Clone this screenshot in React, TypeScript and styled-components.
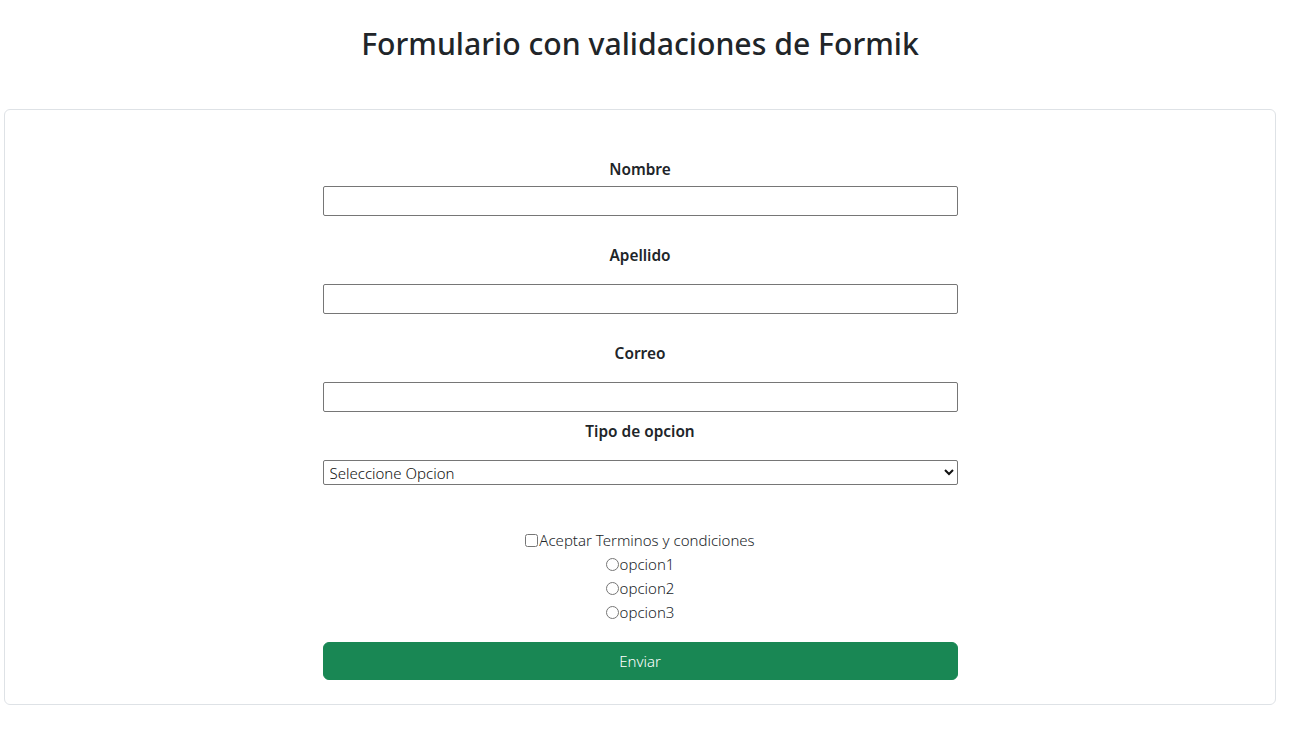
import React from "react";
import styled, { createGlobalStyle } from "styled-components";

const Global = createGlobalStyle`
  html, body { margin: 0; padding: 0; background: #fff; }
  body {
    font-family: "Noto Sans", "Open Sans", sans-serif;
    color: #212529;
    font-size: 16px;
    line-height: 1.5;
  }
  *, *::before, *::after { box-sizing: border-box; }
`;

const Page = styled.div`
  display: flex;
  flex-direction: column;
  padding: 25px 32px 0 4px;
`;

const Title = styled.h1`
  margin: 0 0 46px;
  text-align: center;
  font-size: 30.2px;
  font-weight: 500;
  line-height: 38px;
  color: #212529;
`;

const Card = styled.div`
  border: 1px solid #dee2e6;
  border-radius: 6px;
  padding: 48px 0 24px;
  display: flex;
  justify-content: center;
`;

const Form = styled.form`
  width: 635px;
  display: flex;
  flex-direction: column;
  align-items: stretch;
`;

const Label = styled.label<{ $gap: number; $top: number }>`
  display: block;
  text-align: center;
  font-weight: 600;
  font-size: 15.4px;
  line-height: 24px;
  margin-top: ${(p) => p.$top}px;
  margin-bottom: ${(p) => p.$gap}px;
`;

const Input = styled.input`
  display: block;
  width: 100%;
  height: 30px;
  margin: 0;
  border: 1px solid #767676;
  border-radius: 2px;
  font: inherit;
  padding: 1px 4px;
  background: #fff;
`;

const Select = styled.select`
  display: block;
  width: 100%;
  height: 25px;
  margin: 0;
  border: 1px solid #767676;
  border-radius: 2px;
  font-family: inherit;
  font-size: 15px;
  font-weight: 300;
  color: #111;
  background: #fff;
  padding: 0 2px;
`;

const Options = styled.div`
  margin-top: 43px;
  display: flex;
  flex-direction: column;
  align-items: center;
`;

const Line = styled.label`
  display: flex;
  align-items: center;
  font-size: 15px;
  font-weight: 300;
  line-height: 24px;
  color: #212529;
`;

const Check = styled.input`
  margin: 0 1px 0 0;
  width: 13px;
  height: 13px;
`;

const Button = styled.button`
  margin-top: 18px;
  height: 38px;
  width: 100%;
  border: 1px solid #198754;
  border-radius: 6px;
  background: #198754;
  color: #fff;
  font-family: inherit;
  font-size: 15px;
  font-weight: 300;
  cursor: pointer;
`;

export default function App() {
  return (
    <>
      <Global />
      <Page>
        <Title>Formulario con validaciones de Formik</Title>
        <Card>
          <Form onSubmit={(e) => e.preventDefault()}>
            <Label $top={0} $gap={4}>Nombre</Label>
            <Input type="text" />
            <Label $top={28} $gap={16}>Apellido</Label>
            <Input type="text" />
            <Label $top={28} $gap={16}>Correo</Label>
            <Input type="email" />
            <Label $top={8} $gap={16}>Tipo de opcion</Label>
            <Select defaultValue="">
              <option value="">Seleccione Opcion</option>
              <option value="1">opcion1</option>
              <option value="2">opcion2</option>
              <option value="3">opcion3</option>
            </Select>
            <Options>
              <Line>
                <Check type="checkbox" />
                Aceptar Terminos y condiciones
              </Line>
              <Line>
                <Check type="radio" name="op" />
                opcion1
              </Line>
              <Line>
                <Check type="radio" name="op" />
                opcion2
              </Line>
              <Line>
                <Check type="radio" name="op" />
                opcion3
              </Line>
            </Options>
            <Button type="submit">Enviar</Button>
          </Form>
        </Card>
      </Page>
    </>
  );
}
